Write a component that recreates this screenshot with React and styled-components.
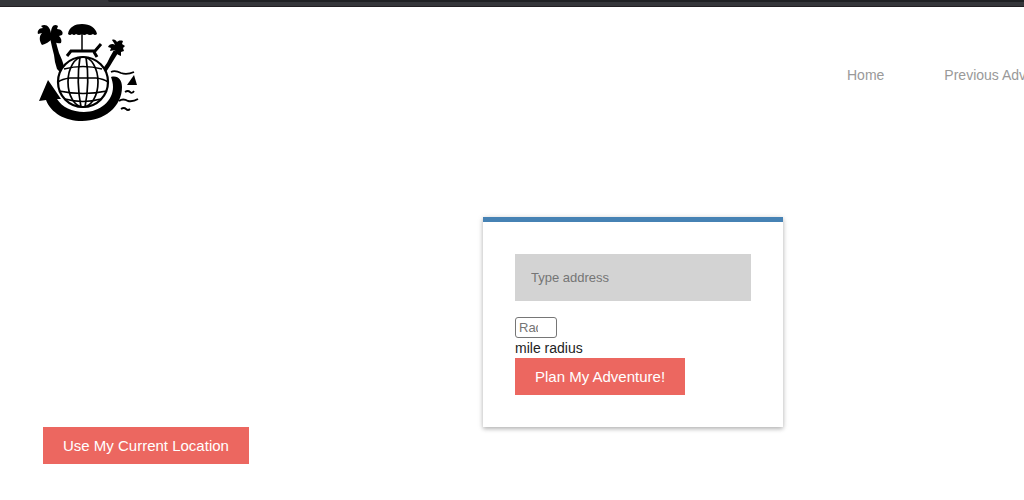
import styled, { createGlobalStyle } from "styled-components";

function Logo(){
    return (
        <LogoMark viewBox="36 22 104 101" role="img" aria-label="Adventure logo">
            {/* left palm */}
            <path d="M50 38H55L57 46L59 53L62 60L64 66L60 72L57 69L55 62L54 55L52 47Z"/>
            <path d="M51 33C50 27 46 23 41 26L43 28C39 28 37 31 38 34L42 33C39 36 39 41 42 45C46 44 49 42 52 39C54 43 58 44 61 43C62 40 61 38 59 36L62 35C64 32 61 29 57 29L58 26C54 23 51 27 51 33Z"/>
            {/* right palm */}
            <path d="M114 50L118 53L113 61L110 66L106 72L102 70L107 63L110 57Z"/>
            <path d="M115 45C113 43 109 44 108 47L111 48L110 51L115 50C115 53 118 55 121 56L121 52L124 51L123 48L125 46L122 44L123 41C120 40 118 41 117 42C116 40 114 39 112 40L114 43Z"/>
            {/* umbrella and chair */}
            <path d="M68 34C69 27 75 24 82 24C90 24 96 28 97 34Q95 36 93 34Q90 36 87 34Q84 36 82 34Q79 36 76 34Q74 36 72 34Q70 36 68 34Z"/>
            <path d="M82 34V51" fill="none" stroke="#000" strokeWidth="1.5"/>
            <path d="M67 56L71 51H95L101 44M94 52L97 57" fill="none" stroke="#000" strokeWidth="3"/>
            {/* globe */}
            <circle cx="83" cy="82" r="25" fill="#fff" stroke="#000" strokeWidth="2.2"/>
            <g fill="none" stroke="#000" strokeWidth="1.7">
                <ellipse cx="83" cy="82" rx="15" ry="25"/>
                <path d="M80 57Q76 82 81 107M86 57Q90 82 85 107"/>
                <path d="M64 69Q83 64 102 69M58 82Q62 79 70 78H96Q104 79 108 82M59 91Q83 96 107 91M65 99Q83 104 101 99"/>
            </g>
            {/* arrow */}
            <path d="M48 80L61 99L57 99C62 107 72 112 84 112C100 112 113 101 113 87C113 83 112 80 111 77C118 75 122 80 122 87C122 107 104 121 82 121C65 121 51 113 46 100L39 101Z"/>
            {/* sail and waves */}
            <path d="M134 75L127 85H137Z"/>
            <path d="M111 72Q115 70 121 73Q127 75 134 72M125 92Q128 90 130 92T134 91M119 101Q123 98 128 101Q133 102 138 99M121 109Q124 107 126 109T130 109" fill="none" stroke="#000" strokeWidth="1.8"/>
        </LogoMark>
    )
}

function App(){
    return (
        <Page>
            <GlobalStyle/>
            <TopStrip><TabBar/></TopStrip>
            <Header>
                <Logo/>
                <Nav>
                    <NavLink href="#home">Home</NavLink>
                    <NavLink href="#previous">Previous Adventures</NavLink>
                </Nav>
            </Header>
            <Main>
                <CardRow>
                    <Card>
                        <AddressInput type="text" aria-label="Address" placeholder="Type address"/>
                        <RadiusInput id="radius" type="number" placeholder="Radius"/>
                        <RadiusLabel htmlFor="radius">mile radius</RadiusLabel>
                        <Button type="submit">Plan My Adventure!</Button>
                    </Card>
                </CardRow>
                <LocationRow>
                    <Button type="button">Use My Current Location</Button>
                </LocationRow>
            </Main>
        </Page>
    )
}

export default App;

const GlobalStyle = createGlobalStyle`
	body {
		margin: 0;
		background: #fff;
		font-family: "Liberation Sans", Arial, sans-serif;
	}
`;

const Page = styled.div`
	overflow: hidden;
`;

const TopStrip = styled.div`
	height: 6px;
	background-color: #35363a;
	border-bottom: 1px solid #231f23;
`;

const TabBar = styled.div`
	height: 2px;
	margin-left: 108px;
	background-color: #202124;
	border-bottom-left-radius: 4px;
`;

const Header = styled.header`
	display: flex;
	align-items: center;
	justify-content: space-between;
	padding: 15px 0 0 36px;
`;

const LogoMark = styled.svg`
	width: 104px;
	height: 101px;
	flex: none;
`;

const Nav = styled.nav`
	display: flex;
	gap: 60px;
	width: 177px;
	padding-top: 5px;
`;

const NavLink = styled.a`
	color: #999;
	font-size: 14px;
	line-height: 20px;
	text-decoration: none;
	white-space: nowrap;
`;

const Main = styled.main`
	padding-top: 94px;
`;

const CardRow = styled.div`
	display: flex;
	justify-content: center;
	padding-left: 242px;
`;

const Card = styled.form`
	display: flex;
	flex-direction: column;
	align-items: flex-start;
	box-sizing: border-box;
	width: 300px;
	padding: 32px;
	border-top: 5px solid #4682b4;
	background-color: #fff;
	box-shadow: 0 2px 4px rgba(0, 0, 0, 0.2), 0 1px 6px rgba(0, 0, 0, 0.15);
`;

const AddressInput = styled.input`
	box-sizing: border-box;
	width: 100%;
	height: 47px;
	margin: 0 0 16px;
	padding: 16px;
	border: none;
	border-radius: 0;
	background-color: #d3d3d3;
	font-family: inherit;
	font-size: 13px;
	&::placeholder {
		color: #757575;
	}
`;

const RadiusInput = styled.input`
	box-sizing: border-box;
	width: 42px;
	height: 21px;
	margin: 0;
	padding: 1px 3px;
	border: 1px solid #767676;
	border-radius: 3px;
	font-family: inherit;
	font-size: 13px;
	&::placeholder {
		color: #757575;
	}
`;

const RadiusLabel = styled.label`
	color: #222;
	font-size: 14px;
	line-height: 20px;
`;

const Button = styled.button`
	height: 37px;
	padding: 0 20px;
	border: none;
	background-color: #ec6760;
	color: #fff;
	font-family: inherit;
	font-size: 15px;
`;

const LocationRow = styled.div`
	padding-left: 43px;
`;
